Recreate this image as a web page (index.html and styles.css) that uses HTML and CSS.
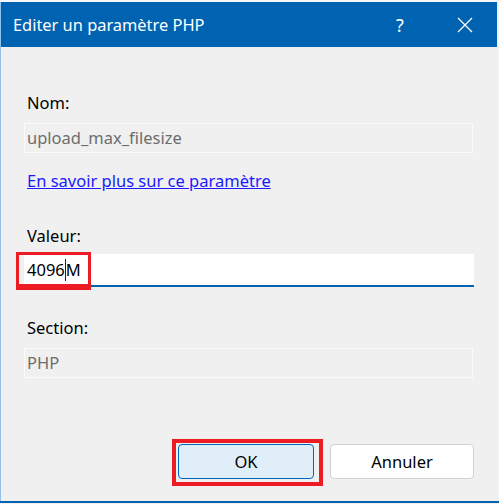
FILE: index.html
```html
<!DOCTYPE html>
<html lang="fr">
<head>
<meta charset="utf-8">
<title>Editer un paramètre PHP</title>
<link rel="stylesheet" href="styles.css">
</head>
<body>
<div class="screen">
  <div class="top-strip"></div>
  <div class="window">
    <div class="titlebar">
      <span class="title">Editer un paramètre PHP</span>
      <span class="help">?</span>
      <span class="close">
        <svg width="16" height="16" viewBox="0 0 16 16"><path d="M1 1L15 15M15 1L1 15" stroke="#ffffff" stroke-width="1.3" fill="none"/></svg>
      </span>
    </div>
    <div class="content">
      <div class="label lbl-nom">Nom:</div>
      <div class="field">upload_max_filesize</div>
      <a class="link" href="#">En savoir plus sur ce paramètre</a>
      <div class="label lbl-valeur">Valeur:</div>
      <div class="input-wrap">
        <div class="input">4096<span class="caret"></span>M</div>
        <div class="highlight hl-input"></div>
      </div>
      <div class="label lbl-section">Section:</div>
      <div class="field">PHP</div>
      <div class="buttons">
        <div class="btn-wrap">
          <button class="btn btn-ok">OK</button>
          <div class="highlight hl-ok"></div>
        </div>
        <button class="btn btn-cancel">Annuler</button>
      </div>
    </div>
  </div>
  <div class="bottom-line"></div>
</div>
</body>
</html>
```
FILE: styles.css
```css
html, body {
  margin: 0;
  padding: 0;
  background: #f0f0f0;
}
body {
  width: 499px;
  height: 504px;
  overflow: hidden;
  font-family: "Noto Sans", "Open Sans", "DejaVu Sans", sans-serif;
}
.screen {
  width: 499px;
  height: 504px;
  display: flex;
  flex-direction: column;
}
.top-strip {
  height: 2px;
  background: #f4f6f9;
}
.window {
  flex: 1;
  display: flex;
  flex-direction: column;
  border-left: 1px solid #8fc2ec;
  border-right: 2px solid #eef3f8;
  background: #f0f0f0;
}
.titlebar {
  height: 45px;
  background: #0063b1;
  color: #ffffff;
  display: flex;
  align-items: center;
  padding-left: 12px;
  font-size: 16.4px;
}
.title {
  flex: 1;
}
.help {
  width: 16px;
  font-size: 18px;
  text-align: center;
  margin-right: 49px;
}
.close {
  width: 16px;
  height: 16px;
  display: flex;
  margin-right: 24px;
}
.content {
  flex: 1;
  padding: 0 23px 0 23px;
  display: flex;
  flex-direction: column;
  align-items: stretch;
  font-size: 16.5px;
}
.label {
  line-height: 20px;
  color: #000000;
  padding-left: 3px;
}
.lbl-nom { margin-top: 46px; }
.lbl-valeur { margin-top: 35px; }
.lbl-section { margin-top: 31px; }
.field {
  margin-top: 10px;
  height: 30px;
  box-sizing: border-box;
  border: 1px solid #fbfbfb;
  background: #f0f0f0;
  color: #6d6d6d;
  line-height: 28px;
  padding-left: 2px;
  margin-right: 1px;
}
.link {
  margin-top: 18px;
  line-height: 20px;
  color: #1a1aff;
  text-decoration: underline;
  padding-left: 3px;
  align-self: flex-start;
}
.input-wrap {
  position: relative;
  margin-top: 8px;
}
.input {
  height: 33px;
  box-sizing: border-box;
  background: #ffffff;
  border-bottom: 2px solid #0063b1;
  color: #000000;
  line-height: 31px;
  padding-left: 3px;
  display: flex;
  align-items: center;
}
.caret {
  display: inline-block;
  width: 1px;
  height: 22px;
  background: #1b1b4a;
}
.highlight {
  position: absolute;
  border: 3px solid #ed1c24;
  box-sizing: border-box;
}
.hl-input {
  left: -8px;
  top: -2px;
  width: 75px;
  height: 38px;
  border-bottom-width: 6px;
}
.buttons {
  margin-top: 66px;
  display: flex;
  justify-content: flex-end;
  gap: 16px;
}
.btn-wrap {
  position: relative;
  display: flex;
}
.btn {
  height: 35px;
  box-sizing: border-box;
  border-radius: 4px;
  font-family: inherit;
  font-size: 16.5px;
  color: #000000;
  padding: 0;
}
.btn-ok {
  width: 136px;
  background: #e0eef9;
  border: 1px solid #0067c0;
}
.btn-cancel {
  width: 144px;
  background: #ffffff;
  border: 1px solid #d1d1d1;
}
.hl-ok {
  left: -6px;
  top: -5px;
  width: 151px;
  height: 47px;
  border-width: 4px;
}
.bottom-line {
  height: 2px;
  background: #0063b1;
  margin-bottom: 1px;
}
```
